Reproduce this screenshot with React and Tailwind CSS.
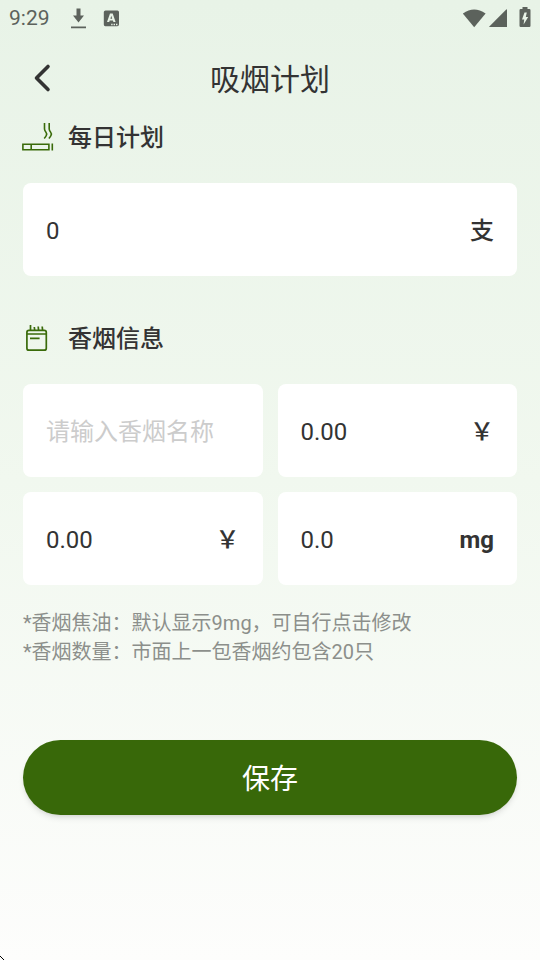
import { useState } from "react";

// status bar icons (download, keyboard, wifi, signal, battery)
function StatusBar() {
    return (
        <div className="flex h-9 items-center justify-between px-[9px] text-[#5c625c]">
            <div className="flex items-center">
                <span className="w-[41px] text-[21px] leading-9">9:29</span>
                <svg className="ml-5 h-6 w-4" viewBox="-1 0 16 24" fill="currentColor">
                    <path d="M5.500 2.500h4V9.500H13L7.500 16.500 2 9.500H5.500zM0 20.500h15v1.700H0z" />
                </svg>
                <svg className="ml-4 h-6 w-6" viewBox="0 0 24 24" fill="currentColor">
                    <path
                        fillRule="evenodd"
                        d="M3.500 4.500h12A1.700 1.700 0 0 1 17 6v12.600a1.700 1.700 0 0 1-1.700 1.700h-12a1.700 1.700 0 0 1-1.500-1.700V6A1.700 1.700 0 0 1 3.500 4.500zM8 7.500 5 16h2.200l.5-1.500h3.200l.5 1.500h2.200L10.700 7.500zm1.300 2.300.9 2.900H8.400zM9.200 17.800v1.400h1.400v-1.400zm2.400 0v1.400H13v-1.400zm2.400 0v1.400h1.400v-1.400z"
                    />
                </svg>
            </div>
            <div className="flex items-center">
                <svg className="h-6 w-6" viewBox="1 0 24 24" fill="currentColor">
                    <path d="M.8 7.600Q12 -.6 23.600 7.600L12.200 21.300z" />
                </svg>
                <svg className="ml-0.5 h-6 w-5" viewBox="1 0 20 24" fill="currentColor">
                    <path d="M18.500 3.200Q19 3 19 3.500V21H1.500Q1 21 1.300 20.500z" />
                </svg>
                <svg className="ml-2.5 h-6 w-3" viewBox="0 0 12 24" fill="currentColor">
                    <path
                        fillRule="evenodd"
                        d="M3.500 1h5v2H10.300Q11.500 3 11.500 4.200V19.800Q11.500 21 10.300 21H1.700Q.5 21 .5 19.800V4.200Q.5 3 1.700 3H3.500zM5.500 6.500 3 13.500h2.200L4.600 18.500 9.200 11H6.800l1-4.500z"
                    />
                </svg>
            </div>
        </div>
    );
}

function CigaretteIcon() {
    return (
        <svg className="h-8 w-8 overflow-visible" viewBox="2 1 32 32" fill="none" stroke="#3a6b0a" strokeWidth="1.600">
            <path d="M1.900 23.300h26v5.400h-26zM10.200 23.300v5.400M31.300 22.500v7" />
            <path d="M23.500 2v6q.1 1.700 1.300 3 1.400 1.700.5 3.500-.6 1.400-2.100 3" />
            <path d="M28.200 2v6q.1 1.700 1.300 3 1.400 1.700.5 3.500-.6 1.400-2.100 3" />
        </svg>
    );
}

function PackIcon() {
    return (
        <svg className="h-8 w-8" viewBox="1 1 32 32" fill="none" stroke="#3a6b0a" strokeWidth="1.700">
            <rect x="4.900" y="8.400" width="19.400" height="19.800" rx="2" />
            <path d="M5 12h19.300M8 16.300h9.600M8.500 3v5.400M12.300 5l.4 3.400M16.200 4.500l.4 3.900M20.200 4.500l.4 3.900" />
        </svg>
    );
}

function SectionTitle({ icon, children }) {
    return (
        <div className="flex h-[34px] items-center gap-[13px]">
            {icon}
            <h2 className="text-2xl font-medium">{children}</h2>
        </div>
    );
}

function Field({ label, unit, value, onChange, placeholder }) {
    return (
        <label className="flex h-[93px] items-center rounded-lg bg-white px-[23px] pt-0.5 text-2xl">
            <input
                type="text"
                aria-label={label}
                value={value}
                placeholder={placeholder}
                onChange={(e) => onChange(e.target.value)}
                className="w-full min-w-0 flex-1 bg-transparent outline-none placeholder:text-[#cccccc]"
            />
            {unit && <span className={unit === "mg" ? "font-bold" : "font-medium"}>{unit}</span>}
        </label>
    );
}

export default function App() {
    const [daily, setDaily] = useState("0");
    const [name, setName] = useState("");
    const [packPrice, setPackPrice] = useState("0.00");
    const [unitPrice, setUnitPrice] = useState("0.00");
    const [tar, setTar] = useState("0.0");

    return (
        <div
            lang="zh-CN"
            className="relative min-h-screen bg-linear-to-b from-[#e8f3e7] via-[#f1f8ef] to-[#fdfdfc] font-[Roboto,'Noto_Sans_CJK_SC',sans-serif] text-[#333333]"
        >
            <StatusBar />

            <header className="grid h-[84px] grid-cols-[1fr_auto_1fr] items-center px-[23px]">
                <button type="button" aria-label="返回" className="flex h-10 w-10 items-center justify-center">
                    <svg className="h-8 w-8" viewBox="0 0 32 32" fill="none" stroke="currentColor" strokeWidth="3.600">
                        <path d="M21 4.500 9.500 16 21 27.500" strokeLinecap="round" strokeLinejoin="round" />
                    </svg>
                </button>
                <h1 className="pt-1 text-3xl">吸烟计划</h1>
            </header>

            <form onSubmit={(e) => e.preventDefault()} className="px-[23px] pt-px">
                <SectionTitle icon={<CigaretteIcon />}>每日计划</SectionTitle>
                <div className="mt-7">
                    <Field label="每日计划" unit="支" value={daily} onChange={setDaily} />
                </div>

                <div className="mt-[46px]">
                    <SectionTitle icon={<PackIcon />}>香烟信息</SectionTitle>
                </div>
                <div className="mt-7 grid grid-cols-2 gap-[15px]">
                    <Field label="香烟名称" placeholder="请输入香烟名称" value={name} onChange={setName} />
                    <Field label="每包价格" unit="￥" value={packPrice} onChange={setPackPrice} />
                    <Field label="每支价格" unit="￥" value={unitPrice} onChange={setUnitPrice} />
                    <Field label="香烟焦油" unit="mg" value={tar} onChange={setTar} />
                </div>

                <div className="mt-6 text-xl leading-[29px] text-[#8c8f8b]">
                    <p>*香烟焦油：默认显示9mg，可自行点击修改</p>
                    <p>*香烟数量：市面上一包香烟约包含20只</p>
                </div>

                <button
                    type="submit"
                    className="mt-[73px] h-[75px] w-full rounded-full bg-[#386809] pt-1 text-[28px] text-white shadow-md"
                >
                    保存
                </button>
            </form>

            <svg className="absolute bottom-0 left-0 h-1 w-1" viewBox="0 0 4 4" fill="#000000">
                <path d="M0 0h1v1h1v1H1V1H0zM2 2h1v1H2zM3 3h1v1H3z" />
            </svg>
        </div>
    );
}
